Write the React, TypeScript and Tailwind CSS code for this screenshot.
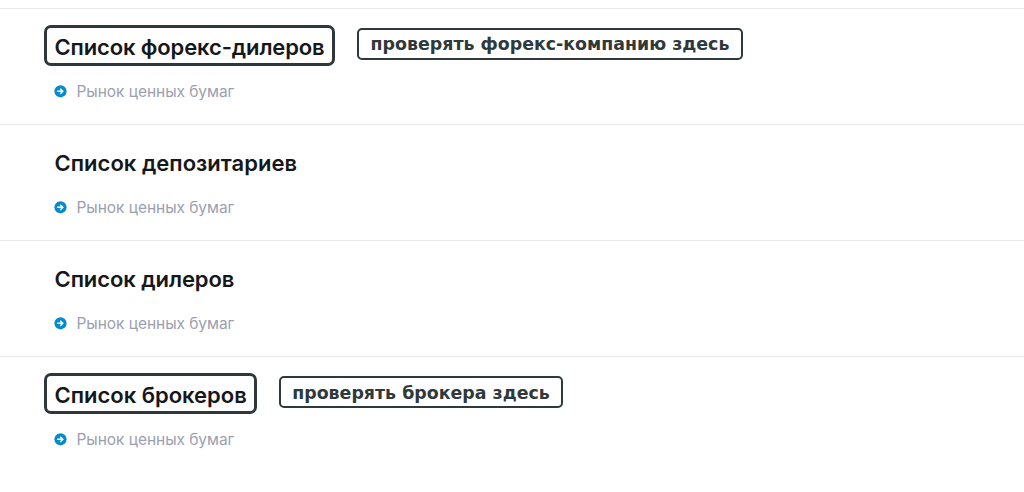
import { ReactNode } from "react"

const registries = [
  {name: "Список форекс-дилеров", category: "Рынок ценных бумаг", note: "проверять форекс-компанию здесь", tracking: "tracking-[-0.13px]", titleWidth: "w-[291px]", noteWidth: "w-[386px]"},
  {name: "Список депозитариев", category: "Рынок ценных бумаг", tracking: "tracking-[0.02px]", titleWidth: "w-[264px]"},
  {name: "Список дилеров", category: "Рынок ценных бумаг", tracking: "tracking-[-0.08px]", titleWidth: "w-[202px]"},
  {name: "Список брокеров", category: "Рынок ценных бумаг", note: "проверять брокера здесь", tracking: "tracking-[-0.01px]", titleWidth: "w-[213px]", noteWidth: "w-[284px]"},
]

function ArrowBadge() {
  return (
    <svg className="w-[13px] h-[13px] shrink-0" viewBox="0 0 13 13" fill="none">
      <circle cx="6.5" cy="6.3" r="6.1" fill="#038bd1" />
      <path d="M3.2 6.3h5.6M6.2 3.7 8.8 6.3 6.2 8.9" stroke="white" strokeWidth="1.4" />
    </svg>
  )
}

function Title({ framed, className, children }: { framed: boolean, className: string, children: ReactNode }) {
  return (
    <h2
      className={
        `h-[41px] flex items-center pl-2 pt-[3px] border-[3px] rounded-[7px] text-[22px] font-semibold text-[#15171a] whitespace-nowrap ${className}
        ${framed ? "border-[#2d383b]" : "border-transparent"}`
      }
    >
      {children}
    </h2>
  )
}

export default function App() {
  return (
    <main className="h-[492px] overflow-hidden bg-white pt-2 font-[Inter,sans-serif]">
      {registries.map((item, key) => (
        <section key={key} className="h-[116.1px] border-t border-[#e8e8e9] pt-4 pl-[43.5px]">
          <div className="flex items-start">
            <Title framed={Boolean(item.note)} className={`${item.titleWidth} ${item.tracking}`}>{item.name}</Title>
            {item.note && (
              <div className={`mt-[3px] ml-[22px] h-8 ${item.noteWidth} flex items-center justify-center pt-px pl-px border-2 border-[#2f393c] rounded-[5px] font-[DejaVu_Sans,sans-serif] text-[17.4px] font-bold text-[#2f393c] whitespace-nowrap`}>
                {item.note}
              </div>
            )}
          </div>
          <div className="flex items-center mt-[13.4px] ml-[10px] h-6 gap-[10px] text-[15.5px] tracking-[-0.05px] text-[#9ba0af]">
            <ArrowBadge />
            <span>{item.category}</span>
          </div>
        </section>
      ))}
    </main>
  )
}
